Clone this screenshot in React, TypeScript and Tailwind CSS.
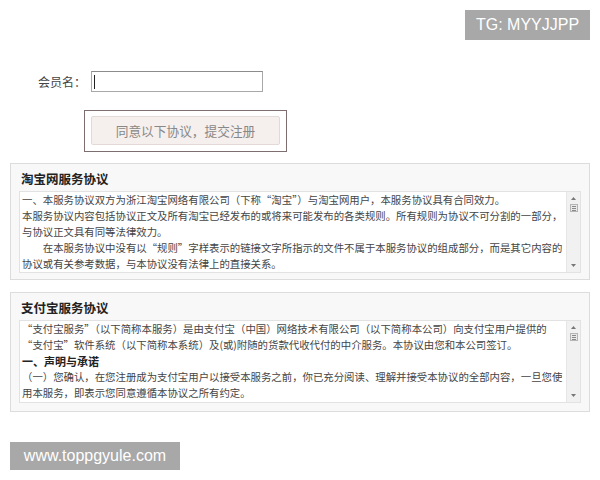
const cjk = { fontFamily: '"Noto Sans CJK SC", "Liberation Sans", sans-serif' };

interface Line {
  text: string;
  bold?: boolean;
}

const taobaoLines: Line[] = [
  { text: '一、本服务协议双方为浙江淘宝网络有限公司（下称“淘宝”）与淘宝网用户，本服务协议具有合同效力。' },
  { text: '本服务协议内容包括协议正文及所有淘宝已经发布的或将来可能发布的各类规则。所有规则为协议不可分割的一部分，' },
  { text: '与协议正文具有同等法律效力。' },
  { text: '　　在本服务协议中没有以“规则”字样表示的链接文字所指示的文件不属于本服务协议的组成部分，而是其它内容的' },
  { text: '协议或有关参考数据，与本协议没有法律上的直接关系。' },
];

const alipayLines: Line[] = [
  { text: '“支付宝服务”（以下简称本服务）是由支付宝（中国）网络技术有限公司（以下简称本公司）向支付宝用户提供的' },
  { text: '“支付宝”软件系统（以下简称本系统）及(或)附随的货款代收代付的中介服务。本协议由您和本公司签订。' },
  { text: '一、声明与承诺', bold: true },
  { text: '（一）您确认，在您注册成为支付宝用户以接受本服务之前，你已充分阅读、理解并接受本协议的全部内容，一旦您使' },
  { text: '用本服务，即表示您同意遵循本协议之所有约定。' },
];

function Scrollbar() {
  return (
    <div className="w-[14px] h-full bg-[#f1f1f1] border-l border-[#e6e6e6] flex flex-col items-center justify-between py-[5px]">
      <div className="flex flex-col items-center gap-[4px]">
        <svg width="5" height="3" viewBox="0 0 5 3">
          <path d="M0 3 L2.5 0 L5 3 Z" fill="#777" />
        </svg>
        <div className="w-[8px] h-[8px] border border-[#b5b5b5] bg-[#e9e9e9] flex flex-col justify-center gap-[1px] px-[1px]">
          <div className="h-px bg-[#8a8a8a]" />
          <div className="h-px bg-[#8a8a8a]" />
          <div className="h-px bg-[#8a8a8a]" />
        </div>
      </div>
      <svg width="5" height="3" viewBox="0 0 5 3">
        <path d="M0 0 L2.5 3 L5 0 Z" fill="#777" />
      </svg>
    </div>
  );
}

function Agreement({
  title,
  lines,
  boxHeight,
  bottom,
}: {
  title: string;
  lines: Line[];
  boxHeight: string;
  bottom: string;
}) {
  return (
    <div className={`border border-[#dcdcdc] bg-[#f8f8f8] pt-[7px] px-[8px] ${bottom}`}>
      <div className="h-[16px] leading-[16px] text-[12.5px] font-bold text-[#222] pl-[2px] mb-[4px]">{title}</div>
      <div className={`flex bg-white border border-[#e2e2e2] overflow-hidden ${boxHeight}`}>
        <div className="flex-1 pl-[2px] text-[10.4px] leading-[16px] text-[#444] overflow-hidden">
          {lines.map((line, i) => (
            <div key={i} className={`whitespace-nowrap ${line.bold ? 'font-bold text-[#222] text-[11px]' : ''}`}>
              {line.text}
            </div>
          ))}
        </div>
        <Scrollbar />
      </div>
    </div>
  );
}

export default function App() {
  return (
    <div className="relative w-[600px] h-[480px] bg-white overflow-hidden" style={cjk}>
      <div
        className="absolute top-[10px] left-[465px] w-[125px] h-[30px] bg-[#a8a8a8] text-white text-[16px] flex items-center justify-center"
        style={{ fontFamily: '"Liberation Sans", Arial, sans-serif' }}
      >
        TG: MYYJJPP
      </div>

      <div className="pt-[71px]">
        <div className="flex items-center">
          <div className="w-[86px] text-right text-[12px] text-[#444]">会员名：</div>
          <div className="ml-[5px] w-[172px] h-[21px] border border-[#a8a8a8] border-t-[#8c8c8c] bg-white flex items-center">
            <div className="ml-[2px] w-px h-[14px] bg-[#222]" />
          </div>
        </div>

        <div className="mt-[18px] ml-[84px] w-[203px] h-[42px] border border-[#7d6f6f] bg-white p-[5px] pl-[6px] pr-[6px]">
          <div className="h-[29px] bg-[#f5efed] border border-[#e3dad8] rounded-[2px] flex items-center justify-center text-[12.7px] text-[#888]">
            同意以下协议，提交注册
          </div>
        </div>

        <div className="mt-[11px] mx-[10px] flex flex-col gap-[12px]">
          <Agreement title="淘宝网服务协议" lines={taobaoLines} boxHeight="h-[82px]" bottom="pb-[6px]" />
          <Agreement title="支付宝服务协议" lines={alipayLines} boxHeight="h-[83px]" bottom="pb-[8px]" />
        </div>
      </div>

      <div
        className="absolute top-[442px] left-[10px] w-[170px] h-[28px] bg-[#a8a8a8] text-white text-[16px] flex items-center justify-center"
        style={{ fontFamily: '"Liberation Sans", Arial, sans-serif' }}
      >
        www.toppgyule.com
      </div>
    </div>
  );
}
